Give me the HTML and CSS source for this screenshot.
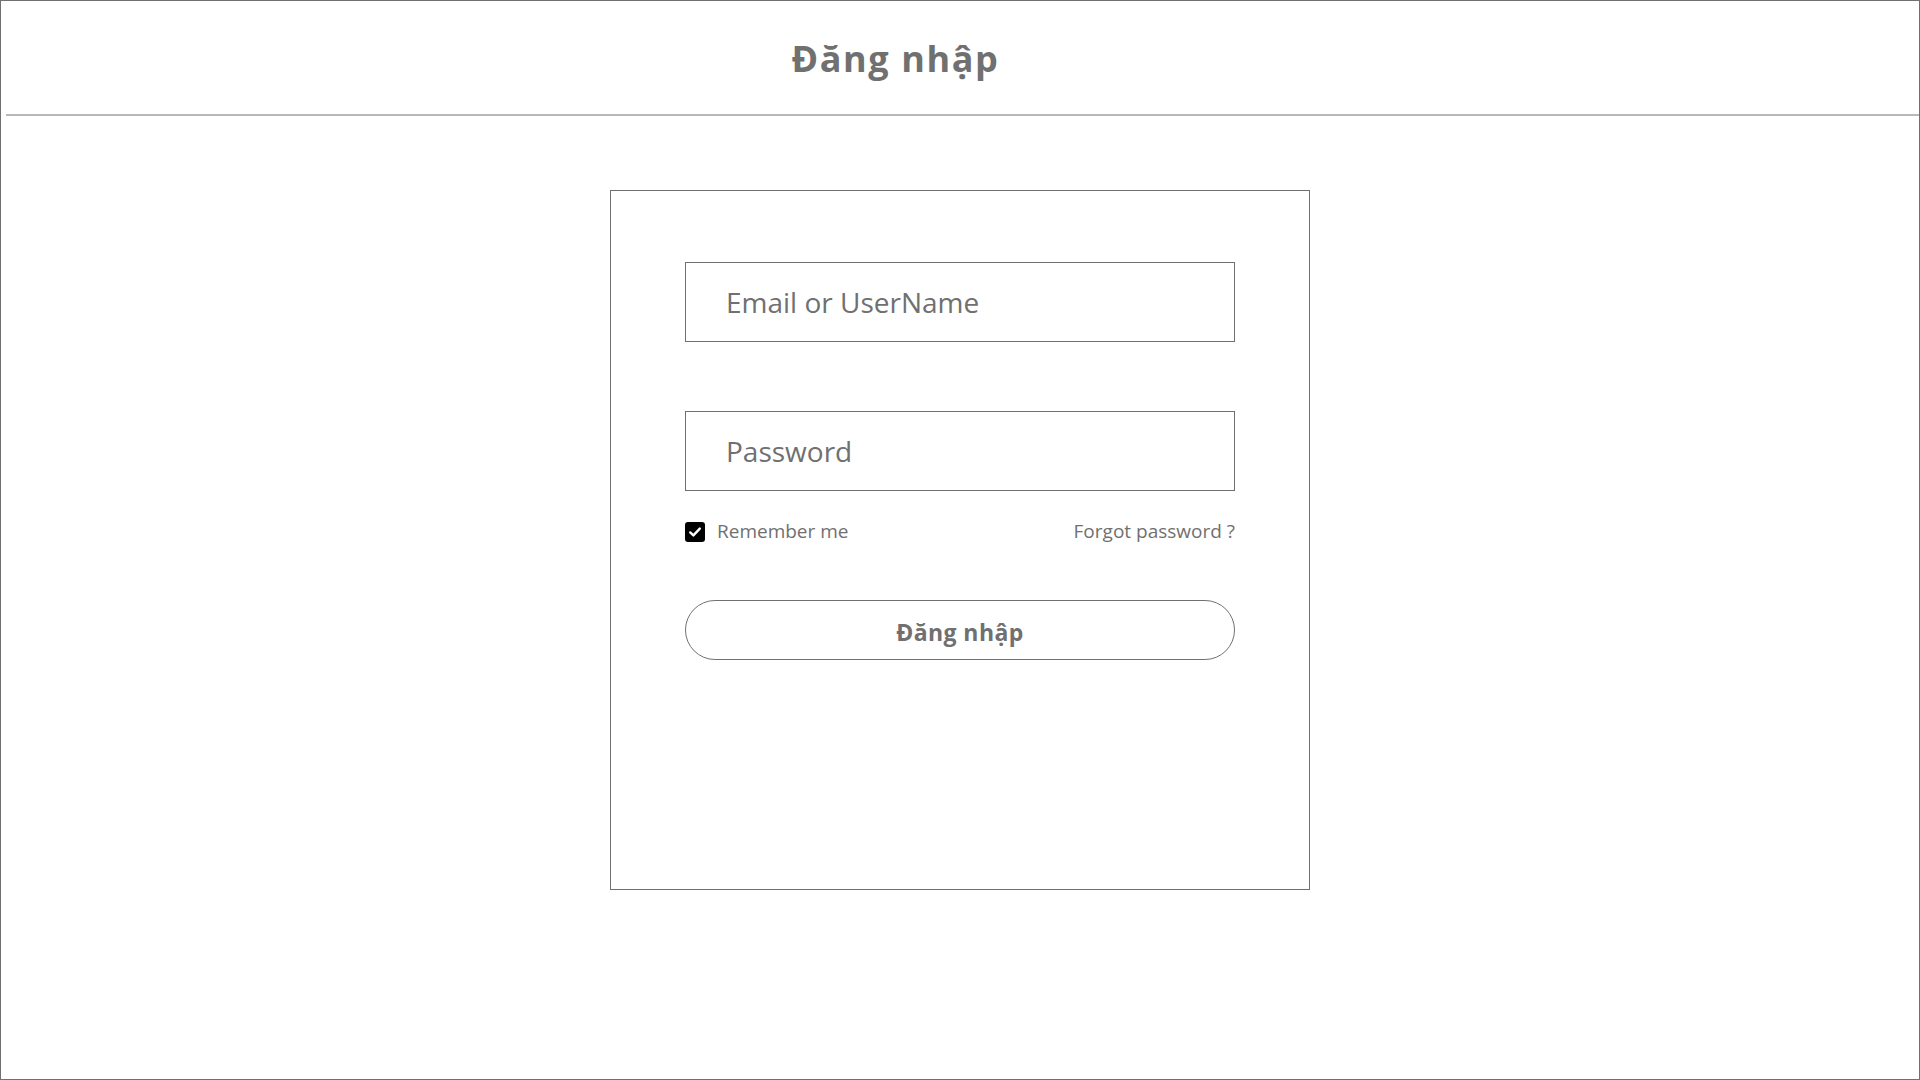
FILE: index.html
```html
<!DOCTYPE html>
<html lang="vi">
<head>
<meta charset="utf-8">
<title>Đăng nhập</title>
<link rel="stylesheet" href="styles.css">
</head>
<body>
<div class="page">
  <header class="header">
    <h1 class="title">Đăng nhập</h1>
  </header>
  <main class="main">
    <form class="card">
      <input class="field" type="text" placeholder="Email or UserName">
      <input class="field field-pass" type="password" placeholder="Password">
      <div class="options">
        <label class="remember">
          <span class="check">
            <svg width="14" height="14" viewBox="0 0 14 14"><path d="M2.2 7.4 L5.4 10.4 L11.8 3.6" fill="none" stroke="#fff" stroke-width="2.4" stroke-linecap="round" stroke-linejoin="round"/></svg>
          </span>
          <span class="remember-text">Remember me</span>
        </label>
        <a class="forgot" href="#">Forgot password ?</a>
      </div>
      <button class="submit" type="button">Đăng nhập</button>
    </form>
  </main>
</div>
</body>
</html>
```
FILE: styles.css
```css
* { box-sizing: border-box; }
html, body { margin: 0; padding: 0; background: #fff; }
body { font-family: "Open Sans", "Noto Sans", sans-serif; color: #707070; }

.page {
  width: 1920px;
  height: 1080px;
  border: 1px solid #707070;
  display: flex;
  flex-direction: column;
}

.header {
  margin-left: 5px;
  height: 115px;
  border-bottom: 2px solid #b8b8b8;
  display: flex;
  justify-content: center;
  padding-right: 134px;
  padding-top: 34px;
}

.title {
  margin: 0;
  font-size: 36px;
  line-height: 48px;
  letter-spacing: 1.6px;
  font-weight: 700;
  color: #707070;
}

.main {
  display: flex;
  justify-content: center;
  padding-top: 74px;
}

.card {
  width: 700px;
  height: 700px;
  border: 1px solid #707070;
  padding: 71px 74px 0;
  display: flex;
  flex-direction: column;
}

.field {
  width: 550px;
  height: 80px;
  border: 1px solid #707070;
  border-radius: 0;
  padding: 0 0 0 40px;
  font-family: "Open Sans", "Noto Sans", sans-serif;
  font-size: 28px;
  color: #707070;
  outline: none;
  background: #fff;
}
.field::placeholder { color: #707070; opacity: 1; }
.field-pass { margin-top: 69px; }

.options {
  margin-top: 27px;
  height: 27px;
  display: flex;
  align-items: center;
  justify-content: space-between;
  font-size: 19px;
  line-height: 27px;
}

.remember { display: flex; align-items: center; gap: 12px; cursor: pointer; }
.check {
  width: 20px;
  height: 20px;
  border-radius: 3px;
  background: #000;
  display: flex;
  align-items: center;
  justify-content: center;
}
.check svg { display: block; }
.remember-text { color: #707070; }
.forgot { color: #707070; text-decoration: none; }

.submit {
  margin-top: 55px;
  width: 550px;
  height: 60px;
  border: 1px solid #707070;
  border-radius: 30px;
  background: #fff;
  font-family: "Open Sans", "Noto Sans", sans-serif;
  font-size: 23px;
  letter-spacing: 0.4px;
  font-weight: 700;
  color: #707070;
  padding: 3px 0 0;
  cursor: pointer;
}
```
